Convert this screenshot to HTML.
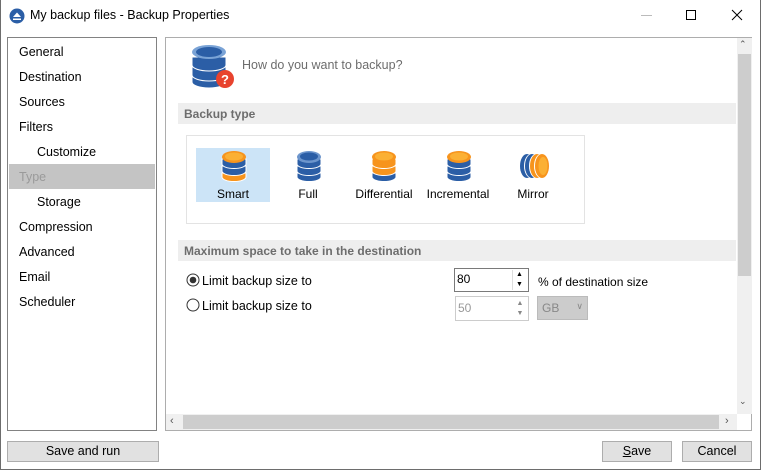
<!DOCTYPE html>
<html><head><meta charset="utf-8"><style>
*{box-sizing:border-box;margin:0;padding:0}
body{width:761px;height:470px;background:#fff;font-family:"Liberation Sans",sans-serif;font-size:12.5px;color:#000;position:relative;overflow:hidden}
.win{position:absolute;left:0;top:0;width:761px;height:470px;border:1px solid #6d6d6d;border-top:none}
.abs{position:absolute}
.side{left:7px;top:37px;width:150px;height:394px;border:1px solid #828282}
.side div{position:absolute;left:11px;height:25px;line-height:27px;font-size:12.5px}
.main{left:165px;top:37px;width:587px;height:394px;border:1px solid #adadad}
.hdr{background:#eeeeee;color:#6d6d6d;font-weight:bold;font-size:12px;height:21px;line-height:22px;padding-left:6px}
.btn{background:#e1e1e1;border:1px solid #adadad;text-align:center;height:21px;line-height:19px;font-size:12.5px}
.lbl{font-size:12px;text-align:center;position:absolute}
svg.db path{stroke:#fff;stroke-width:1}
</style></head><body>
<div class="win"></div>
<svg class="abs" style="left:9px;top:8px" width="16" height="16"><circle cx="8" cy="8" r="7.5" fill="#2b5ea6"/><path d="M4 9 L8 4.5 L12 9Z M4 10.5h8v1.5h-8z" fill="#fff"/></svg>
<div class="abs" style="left:30px;top:8px;font-size:12.5px">My backup files - Backup Properties</div>
<div class="abs" style="left:641px;top:15px;width:11px;height:1px;background:#bbb"></div>
<div class="abs" style="left:686px;top:10px;width:10px;height:10px;border:1px solid #000"></div>
<svg class="abs" style="left:731px;top:9px" width="12" height="12"><path d="M1 1L11 11M11 1L1 11" stroke="#000" stroke-width="1"/></svg>

<div class="abs side">
<div style="top:1px">General</div>
<div style="top:26px">Destination</div>
<div style="top:51px">Sources</div>
<div style="top:76px">Filters</div>
<div style="top:101px;left:29px">Customize</div>
<div style="top:126px;left:1px;width:146px;background:#c4c4c4;color:#9a9a9a;padding-left:10px">Type</div>
<div style="top:151px;left:29px">Storage</div>
<div style="top:176px">Compression</div>
<div style="top:201px">Advanced</div>
<div style="top:226px">Email</div>
<div style="top:251px">Scheduler</div>
</div>

<div class="abs main">
<svg class="abs db" style="left:25px;top:5px" width="46" height="46">
<path d="M1 34v5a17 6 0 0 0 34 0v-5z" fill="#2b5ea6"/>
<path d="M1 24v8a17 6 0 0 0 34 0v-8z" fill="#2b5ea6"/>
<path d="M1 14v8a17 6 0 0 0 34 0v-8z" fill="#2b5ea6"/>
<ellipse cx="18" cy="9" rx="17" ry="7" fill="#7aa3d6"/><ellipse cx="18" cy="9" rx="13" ry="5" fill="#2b5ea6"/>
<circle cx="34" cy="36" r="9" fill="#e8432e"/><text x="34" y="41" font-size="13" font-weight="bold" fill="#fff" text-anchor="middle" font-family="Liberation Sans">?</text>
</svg>
<div class="abs" style="left:76px;top:20px;color:#6d6d6d;font-size:12.5px">How do you want to backup?</div>
<div class="abs hdr" style="left:12px;top:65px;width:558px">Backup type</div>
<div class="abs" style="left:20px;top:97px;width:399px;height:89px;border:1px solid #e3e3e3"></div>
<div class="abs" style="left:30px;top:110px;width:74px;height:54px;background:#cce4f7"></div>
<svg class="abs db" style="left:54px;top:111px" width="28" height="34">
<path d="M2 24v4a12 4.5 0 0 0 24 0v-4z" fill="#f7941d"/><path d="M2 17v5a12 4.5 0 0 0 24 0v-5z" fill="#2b5ea6"/><path d="M2 10v5a12 4.5 0 0 0 24 0v-5z" fill="#2b5ea6"/>
<ellipse cx="14" cy="8" rx="12" ry="6" fill="#f7941d"/><ellipse cx="14" cy="7.5" rx="9" ry="4" fill="#fbb034"/></svg>
<svg class="abs db" style="left:129px;top:111px" width="28" height="34">
<path d="M2 24v4a12 4.5 0 0 0 24 0v-4z" fill="#2b5ea6"/><path d="M2 17v5a12 4.5 0 0 0 24 0v-5z" fill="#2b5ea6"/><path d="M2 10v5a12 4.5 0 0 0 24 0v-5z" fill="#2b5ea6"/>
<ellipse cx="14" cy="8" rx="12" ry="6" fill="#6c95cc"/><ellipse cx="14" cy="7.5" rx="9" ry="4" fill="#2b5ea6"/></svg>
<svg class="abs db" style="left:204px;top:111px" width="28" height="34">
<path d="M2 24v4a12 4.5 0 0 0 24 0v-4z" fill="#2b5ea6"/><path d="M2 17v5a12 4.5 0 0 0 24 0v-5z" fill="#f7941d"/><path d="M2 10v5a12 4.5 0 0 0 24 0v-5z" fill="#f7941d"/>
<ellipse cx="14" cy="8" rx="12" ry="6" fill="#f7941d"/><ellipse cx="14" cy="7.5" rx="9" ry="4" fill="#fbb034"/></svg>
<svg class="abs db" style="left:279px;top:111px" width="28" height="34">
<path d="M2 24v4a12 4.5 0 0 0 24 0v-4z" fill="#2b5ea6"/><path d="M2 17v5a12 4.5 0 0 0 24 0v-5z" fill="#2b5ea6"/><path d="M2 10v5a12 4.5 0 0 0 24 0v-5z" fill="#2b5ea6"/>
<ellipse cx="14" cy="8" rx="12" ry="6" fill="#f7941d"/><ellipse cx="14" cy="7.5" rx="9" ry="4" fill="#fbb034"/></svg>
<svg class="abs" style="left:350px;top:114px" width="36" height="30">
<ellipse cx="11" cy="14" rx="7" ry="12" fill="#2b5ea6"/><ellipse cx="15" cy="14" rx="7" ry="12" fill="#fff"/><ellipse cx="16" cy="14" rx="7" ry="12" fill="#2b5ea6"/>
<ellipse cx="20" cy="14" rx="7" ry="12" fill="#fff"/><ellipse cx="21" cy="14" rx="7" ry="12" fill="#f7941d"/><ellipse cx="25" cy="14" rx="7" ry="12" fill="#fff"/><ellipse cx="26" cy="14" rx="7" ry="12" fill="#f7941d"/><ellipse cx="27" cy="14" rx="4.5" ry="9" fill="#fbb034"/></svg>
<div class="lbl" style="left:30px;top:149px;width:74px">Smart</div>
<div class="lbl" style="left:112px;top:149px;width:60px">Full</div>
<div class="lbl" style="left:183px;top:149px;width:70px">Differential</div>
<div class="lbl" style="left:257px;top:149px;width:70px">Incremental</div>
<div class="lbl" style="left:332px;top:149px;width:70px">Mirror</div>

<div class="abs hdr" style="left:12px;top:202px;width:558px">Maximum space to take in the destination</div>
<svg class="abs" style="left:20px;top:235px" width="14" height="14"><circle cx="7" cy="7" r="6" fill="#fff" stroke="#333"/><circle cx="7" cy="7" r="3.3" fill="#333"/></svg>
<div class="abs" style="left:36px;top:236px">Limit backup size to</div>
<svg class="abs" style="left:20px;top:260px" width="14" height="14"><circle cx="7" cy="7" r="6" fill="#fff" stroke="#333"/></svg>
<div class="abs" style="left:36px;top:261px">Limit backup size to</div>
<div class="abs" style="left:288px;top:230px;width:75px;height:24px;border:1px solid #7a7a7a;padding:3px 2px;font-size:12px">80</div>
<div class="abs" style="left:346px;top:232px;width:14px;height:20px;font-size:7px;line-height:10px;text-align:center;border-left:1px solid #ddd">▲<br>▼</div>
<div class="abs" style="left:372px;top:237px;font-size:12px">% of destination size</div>
<div class="abs" style="left:289px;top:258px;width:74px;height:25px;border:1px solid #ccc;padding:4px 2px;font-size:12px;color:#999">50</div>
<div class="abs" style="left:347px;top:261px;width:14px;height:20px;font-size:7px;line-height:10px;text-align:center;color:#888">▲<br>▼</div>
<div class="abs" style="left:371px;top:258px;width:51px;height:24px;background:#ccc;border:1px solid #bbb;color:#888;font-size:12px;padding:4px 4px">GB <span style="float:right;font-size:9px">∨</span></div>

<div class="abs" style="left:571px;top:0;width:15px;height:376px;background:#f0f0f0"></div>
<div class="abs" style="left:572px;top:16px;width:13px;height:222px;background:#cdcdcd"></div>
<div class="abs" style="left:573px;top:1px;font-size:9px;color:#555">⌃</div>
<div class="abs" style="left:573px;top:358px;font-size:9px;color:#555">⌄</div>
<div class="abs" style="left:0;top:376px;width:571px;height:16px;background:#f0f0f0"></div>
<div class="abs" style="left:17px;top:377px;width:536px;height:14px;background:#cdcdcd"></div>
<div class="abs" style="left:4px;top:377px;font-size:11px;color:#555">‹</div>
<div class="abs" style="left:559px;top:377px;font-size:11px;color:#555">›</div>
</div>

<div class="abs btn" style="left:7px;top:441px;width:152px">Save and run</div>
<div class="abs btn" style="left:602px;top:441px;width:70px"><u>S</u>ave</div>
<div class="abs btn" style="left:682px;top:441px;width:70px">Cancel</div>
</body></html>
